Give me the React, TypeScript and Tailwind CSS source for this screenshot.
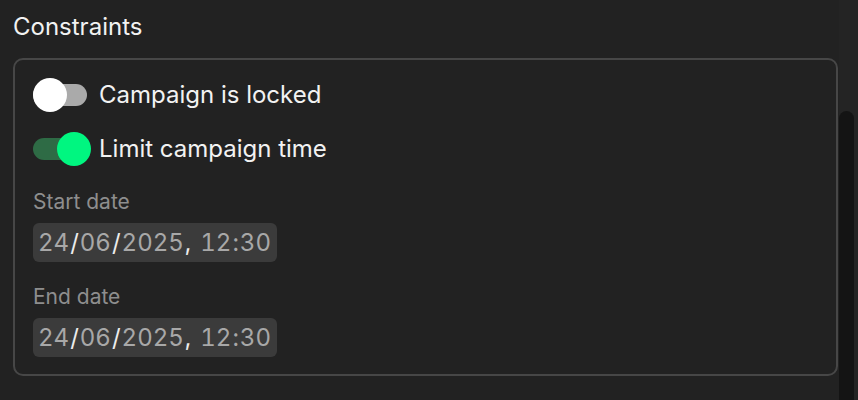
function Toggle({ on }: { on: boolean }) {
  return (
    <span className="relative block h-[34px] w-[58px] shrink-0">
      <span
        className={`absolute left-0 top-[6px] h-[22px] w-[54px] rounded-full ${
          on ? "bg-[#2e6b45]" : "bg-[#aaaaaa]"
        }`}
      />
      <span
        className={`absolute top-0 h-[34px] w-[34px] rounded-full ${
          on ? "left-[24px] bg-[#00f680]" : "left-0 bg-white"
        }`}
      />
    </span>
  );
}

function ToggleRow({ on, label }: { on: boolean; label: string }) {
  return (
    <div className="flex h-[34px] items-center gap-[8px]">
      <Toggle on={on} />
      <span className="text-[24px] leading-none text-[#f2f2f2]">{label}</span>
    </div>
  );
}

function DateField({ label }: { label: string }) {
  const sep = "text-[#ececec]";
  return (
    <div>
      <p className="h-[24px] text-[21px] leading-[24px] text-[#8e8e8e]">{label}</p>
      <div className="mt-[9px] inline-flex h-[39px] items-center rounded-[6px] bg-[#3b3b3b] pl-[5px] pr-[6px] pt-[1px] text-[24px] leading-none text-[#a8a8a8] tabular-nums">
        <span>24</span>
        <span className={`px-[1px] ${sep}`}>/</span>
        <span>06</span>
        <span className={`px-[1px] ${sep}`}>/</span>
        <span>2025</span>
        <span className={`pl-[1px] pr-[9px] ${sep}`}>,</span>
        <span>12</span>
        <span className="px-[1px]">:</span>
        <span>30</span>
      </div>
    </div>
  );
}

export default function App() {
  return (
    <div
      className="flex h-[400px] w-[858px] overflow-hidden bg-[#222222]"
      style={{ fontFamily: "Inter, 'Noto Sans', sans-serif" }}
    >
      <div className="flex-1 pl-[13px] pr-[1px]">
        <h2 className="pt-[13px] text-[24px] leading-[28px] text-[#f2f2f2]">Constraints</h2>
        <div className="mt-[17px] rounded-[10px] border-2 border-[#474747] pb-[17px] pl-[18px] pt-[18px]">
          <div className="flex flex-col gap-[20px]">
            <ToggleRow on={false} label="Campaign is locked" />
            <ToggleRow on={true} label="Limit campaign time" />
          </div>
          <div className="mt-[24px]">
            <DateField label="Start date" />
          </div>
          <div className="mt-[23px]">
            <DateField label="End date" />
          </div>
        </div>
      </div>
      {/* scrollbar */}
      <div className="flex w-[19px] flex-col bg-[#242424] pr-[4px]">
        <div className="mt-[111px] flex-1 rounded-t-[8px] bg-[#141414]" />
      </div>
    </div>
  );
}
